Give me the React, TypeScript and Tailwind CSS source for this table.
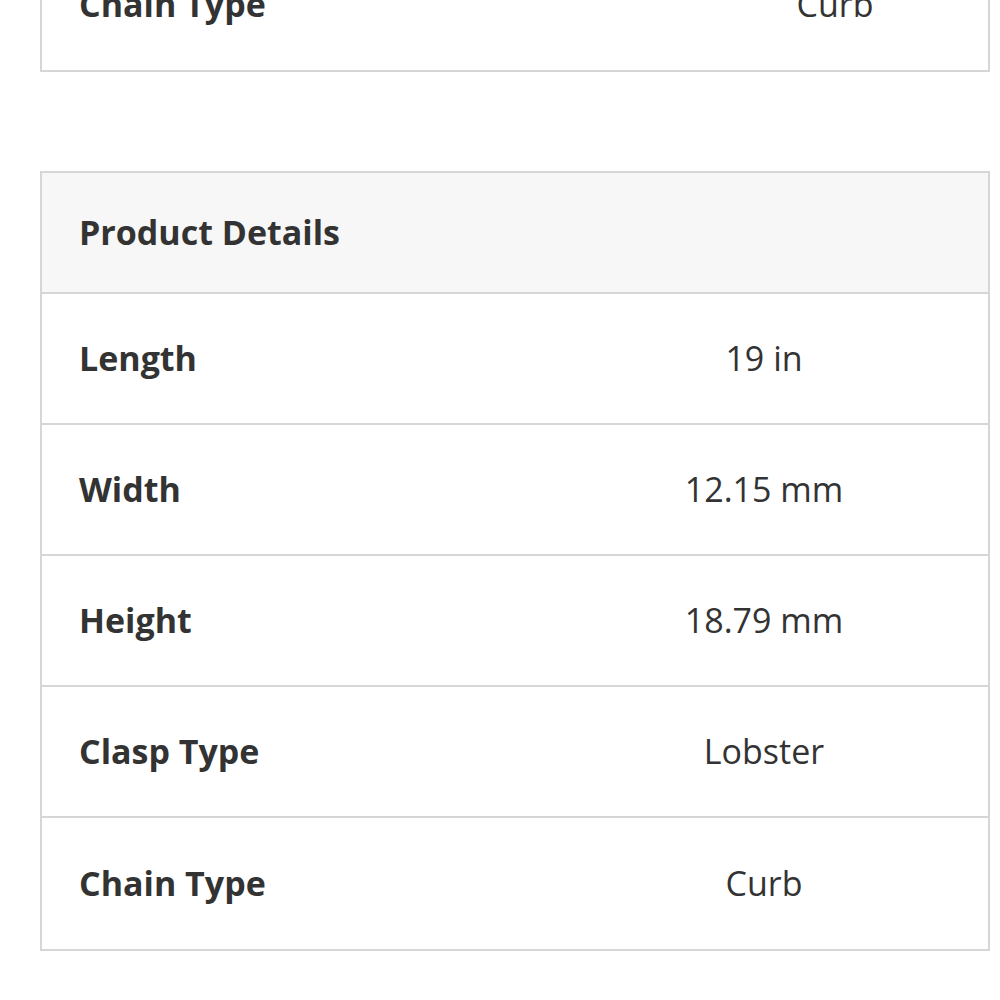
const rows = [
  { label: "Length", value: "19 in" },
  { label: "Width", value: "12.15 mm" },
  { label: "Height", value: "18.79 mm" },
  { label: "Clasp Type", value: "Lobster" },
  { label: "Chain Type", value: "Curb" },
];

const App = () => {
  return (
    <div
      className="min-h-[1000px] bg-white overflow-hidden text-[#333333]"
      style={{ fontFamily: '"Open Sans", "Liberation Sans", sans-serif' }}
    >
      <div className="pl-[40px] pr-[10px]">
        {/* previous table, scrolled off the top */}
        <div className="-mt-[63px] border-2 border-[#d6d6d6]">
          <div className="grid grid-cols-[640px_1fr] h-[131px] items-center">
            <div className="pl-[37px] text-[34px] font-bold">Chain Type</div>
            <div className="text-center text-[34px]">Curb</div>
          </div>
        </div>

        <div className="mt-[99px] border-2 border-[#d6d6d6]">
          <div className="h-[121px] bg-[#f7f7f7] flex items-center pl-[37px] border-b-2 border-[#d6d6d6]">
            <h2 className="text-[34px] font-bold">Product Details</h2>
          </div>
          {rows.map((row, i) => (
            <div
              key={row.label}
              className={
                "grid grid-cols-[498px_1fr] h-[131px] items-center" +
                (i < rows.length - 1 ? " border-b-2 border-[#d6d6d6]" : "")
              }
            >
              <div className="pl-[37px] text-[34px] font-bold">{row.label}</div>
              <div className="text-center text-[34px]">{row.value}</div>
            </div>
          ))}
        </div>
      </div>
    </div>
  );
};

export default App;
